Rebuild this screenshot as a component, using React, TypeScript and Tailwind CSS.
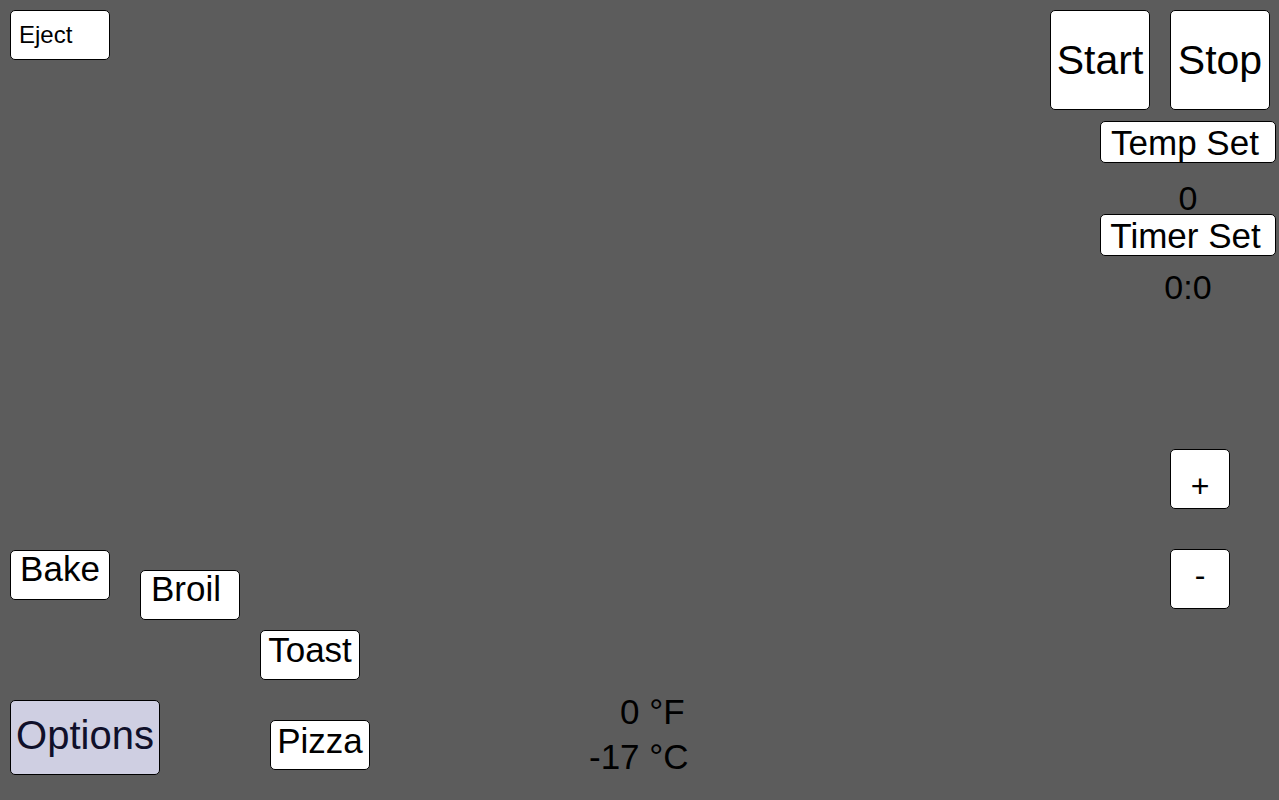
import React from "react";

type BtnProps = {
  label: string;
  className?: string;
};

function PanelButton({ label, className = "" }: BtnProps) {
  return (
    <button
      type="button"
      className={`flex shrink-0 bg-white border border-black rounded-[5px] text-black leading-none ${className}`}
    >
      {label}
    </button>
  );
}

export default function App() {
  return (
    <div
      className="flex w-full h-[800px] overflow-hidden bg-[#5c5c5c] text-black"
      style={{ fontFamily: '"Liberation Sans", Arial, sans-serif' }}
    >
      {/* left: eject + cooking modes */}
      <div className="w-[370px] shrink-0 flex flex-col justify-between pl-[10px] pt-[10px] pb-[25px]">
        <PanelButton label="Eject" className="w-[100px] h-[50px] items-center pl-2 text-[24px]" />

        <div className="flex flex-col">
          <div className="flex items-start gap-[30px]">
            <PanelButton label="Bake" className="w-[100px] h-[50px] justify-center items-start pt-0 text-[35px]" />
            <PanelButton
              label="Broil"
              className="mt-[20px] w-[100px] h-[50px] justify-start items-start pl-[10px] text-[35px]"
            />
          </div>
          <PanelButton
            label="Toast"
            className="ml-[250px] mt-[10px] w-[100px] h-[50px] justify-center items-start pt-[1px] text-[35px]"
          />
          <div className="flex items-start gap-[110px] mt-[20px]">
            <button
              type="button"
              className="flex shrink-0 w-[150px] h-[75px] items-center justify-center pb-[5px] bg-[#cfcfe2] border border-black rounded-[5px] text-[#10102a] text-[40px] leading-none"
            >
              Options
            </button>
            <PanelButton
              label="Pizza"
              className="mt-[20px] w-[100px] h-[50px] justify-center items-start pt-[2px] text-[35px]"
            />
          </div>
        </div>
      </div>

      {/* middle: temperature readout */}
      <div className="flex-1 flex flex-col justify-end pl-[219px] pb-[26px] text-[35px] leading-none">
        <div className="pl-[31px]">0 °F</div>
        <div className="mt-[10px]">-17 °C</div>
      </div>

      {/* right: controls */}
      <div className="w-[226px] shrink-0 mr-[3px] pt-[10px] flex flex-col">
        <div className="flex gap-[20px]">
          <PanelButton label="Start" className="w-[100px] h-[100px] items-center justify-center text-[41px]" />
          <PanelButton label="Stop" className="w-[100px] h-[100px] items-center justify-center text-[41px]" />
        </div>
        <div className="ml-[50px] flex flex-col">
          <PanelButton
            label="Temp Set"
            className="mt-[11px] w-[176px] h-[42px] items-center justify-center pr-[6px] text-[35px]"
          />
          <div className="mt-[19px] h-[32px] text-center text-[34px] leading-[32px]">0</div>
          <PanelButton
            label="Timer Set"
            className="w-[176px] h-[42px] items-center justify-center pr-[5px] text-[35px]"
          />
          <div className="mt-[14px] h-[38px] text-center text-[34px] leading-[34px]">0:0</div>
        </div>
        <div className="ml-[120px] mt-[141px] flex flex-col gap-[40px]">
          <PanelButton label="+" className="w-[60px] h-[60px] justify-center items-start pt-[20px] text-[32px]" />
          <PanelButton label="-" className="w-[60px] h-[60px] justify-center items-start pt-[9px] text-[32px]" />
        </div>
      </div>
    </div>
  );
}
